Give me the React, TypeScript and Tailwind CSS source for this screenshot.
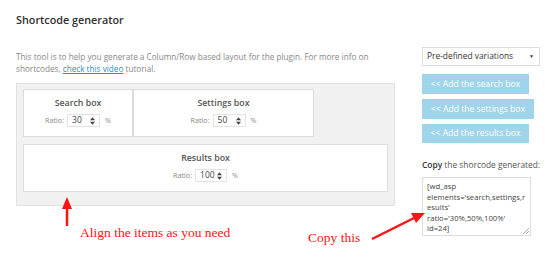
import React from "react";

function Spin({ value, w }: { value: string; w: string }) {
  return (
    <div className={`flex items-center h-[13px] border border-[#e3e3e3] bg-white ${w}`}>
      <span className="flex-1 pl-[4px] text-[8.5px] leading-none text-[#444]">{value}</span>
      <svg width="5" height="8" viewBox="0 0 6 9" className="mr-[4px]">
        <path d="M0 3.5 L3 0 L6 3.5 Z" fill="#444" />
        <path d="M0 5.5 L3 9 L6 5.5 Z" fill="#444" />
      </svg>
    </div>
  );
}

function Box({ title, value, w, spinW }: { title: string; value: string; w: string; spinW: string }) {
  return (
    <div className={`h-[48px] bg-white border border-[#dcdcdc] flex flex-col items-center pt-[7px] ${w}`}>
      <div className="text-[8.8px] leading-[12px] font-semibold text-[#555]">{title}</div>
      <div className="flex items-center gap-[3px] mt-[5px]">
        <span className="text-[7.2px] text-[#888]">Ratio:</span>
        <Spin value={value} w={spinW} />
        <span className="text-[7.2px] text-[#888] ml-[2px]">%</span>
      </div>
    </div>
  );
}

export default function App() {
  return (
    <div className="relative w-[550px] h-[257px] bg-white overflow-hidden font-['Open_Sans',sans-serif]">
      <div className="flex">
        <div className="w-[395px] pl-[16px]">
          <h1 className="pt-[12px] text-[10.8px] leading-[16px] font-semibold text-[#2f2f2f]">Shortcode generator</h1>
          <p className="mt-[23px] text-[8.2px] leading-[11.5px] text-[#888] whitespace-nowrap">
            This tool is to help you generate a Column/Row based layout for the plugin. For more info on
            <br />
            shortcodes, <span className="text-[#2a8fc7] underline">check this video</span> tutorial.
          </p>
          <div className="mt-[9px] h-[123px] bg-[#f1f1f1] border border-[#e2e2e2] pt-[5px] px-[6px] flex flex-col gap-[7px]">
            <div className="flex">
              <Box title="Search box" value="30" w="w-[110px]" spinW="w-[33px]" />
              <Box title="Settings box" value="50" w="w-[181px]" spinW="w-[33px]" />
            </div>
            <Box title="Results box" value="100" w="w-full" spinW="w-[32px]" />
          </div>
          <div className="mt-[19px] pl-[64px] text-[13.5px] leading-[16px] text-[#ff1414] font-['Liberation_Serif',serif]">
            Align the items as you need
          </div>
        </div>
        <div className="ml-[27px] w-[118px]">
          <div className="mt-[47px] h-[19px] border border-[#dddddd] flex items-center justify-between pl-[4px] pr-[5px]">
            <span className="text-[8.4px] text-[#333]">Pre-defined variations</span>
            <span className="text-[5px] text-[#333]">▼</span>
          </div>
          <div className="mt-[8px] flex flex-col gap-[5px] items-start">
            <div className="w-[107px] h-[20px] bg-[#9fd4ea] text-white text-[8.6px] flex items-center justify-center">&lt;&lt; Add the search box</div>
            <div className="w-[112px] h-[20px] bg-[#9fd4ea] text-white text-[8.6px] flex items-center justify-center">&lt;&lt; Add the settings box</div>
            <div className="w-[107px] h-[19px] bg-[#9fd4ea] text-white text-[8.6px] flex items-center justify-center">&lt;&lt; Add the results box</div>
          </div>
          <div className="mt-[16px] text-[8.4px] leading-[12px] text-[#555] whitespace-nowrap">
            <b className="font-semibold text-[#333]">Copy</b> the shorcode generated:
          </div>
          <div className="relative mt-[6px] w-[109px] h-[59px] border border-[#dddddd] pl-[4px] pt-[3px] text-[7.7px] leading-[10.6px] text-[#444] whitespace-pre">
            {"[wd_asp\nelements='search,settings,r\nesults'\nratio='30%,50%,100%'\nid=24]"}
            <svg width="6" height="6" viewBox="0 0 6 6" className="absolute right-[1px] bottom-[1px]">
              <path d="M6 0 L0 6 M6 3 L3 6" stroke="#999" strokeWidth="0.8" />
            </svg>
          </div>
        </div>
      </div>
      <div className="absolute left-[308px] top-[230px] text-[13.5px] leading-[16px] text-[#ff1414] font-['Liberation_Serif',serif]">
        Copy this
      </div>
      <svg className="absolute left-0 top-0 pointer-events-none" width="550" height="257">
        <line x1="67" y1="226" x2="67" y2="208" stroke="#ff1414" strokeWidth="2.5" />
        <path d="M67 197 L62 209 L72 209 Z" fill="#ff1414" />
        <line x1="372" y1="239" x2="414" y2="218" stroke="#ff1414" strokeWidth="2.5" />
        <path d="M425 213 L411 213 L416 223 Z" fill="#ff1414" />
      </svg>
    </div>
  );
}
